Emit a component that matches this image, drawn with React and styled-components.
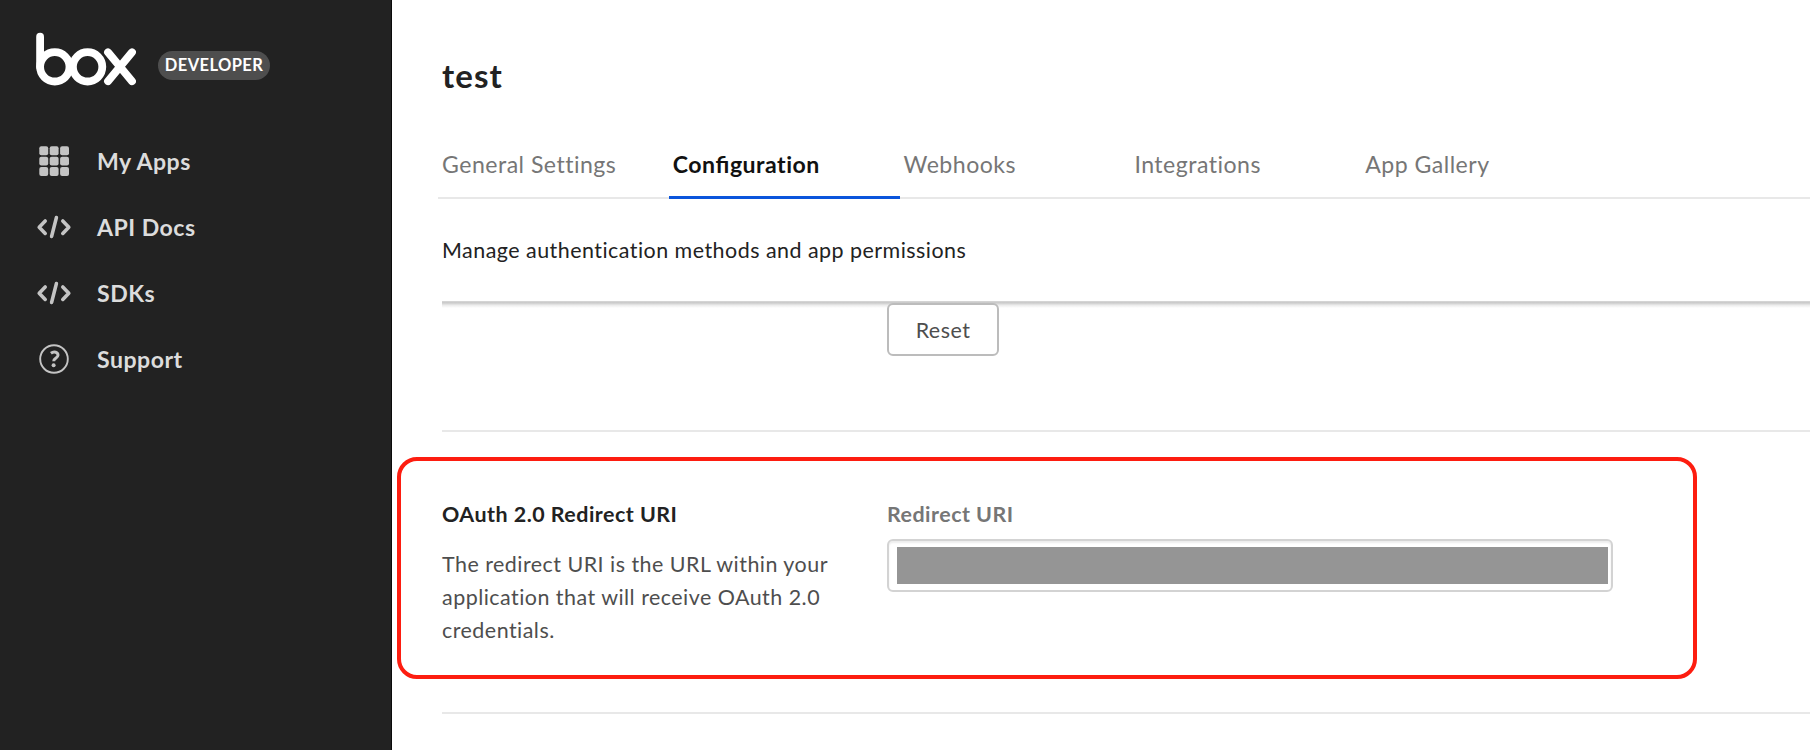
import React from "react";
import styled, { createGlobalStyle } from "styled-components";

const GlobalStyle = createGlobalStyle`
  *, *::before, *::after { box-sizing: border-box; }
  body {
    margin: 0;
    background: #fff;
    color: #222;
    font-family: Lato, "Liberation Sans", sans-serif;
    font-size: 21.45px;
    line-height: 33px;
    letter-spacing: 0.48px;
    overflow: hidden;
  }
  h1, h2, p { margin: 0; }
`;

const Page = styled.div`
  display: flex;
  height: 750px;
  overflow: hidden;
`;

const Sidebar = styled.aside`
  flex: none;
  width: 392px;
  background: #222;
  border-right: 1px solid #0a0a0a;
`;

const Brand = styled.div`
  display: flex;
  align-items: flex-start;
  padding: 32px 0 0 36px;
  height: 128px;
`;

const Badge = styled.span`
  margin: 19px 0 0 22px;
  width: 112px;
  height: 29px;
  border-radius: 15px;
  background: #4e4e4e;
  color: #fff;
  font-size: 16.5px;
  font-weight: 700;
  line-height: 29px;
  letter-spacing: 0.4px;
  text-align: center;
`;

const NavItem = styled.a`
  display: flex;
  align-items: center;
  height: 66px;
  padding-left: 36px;
  color: #dcdcdc;
  font-size: 23.1px;
  font-weight: 700;
  svg {
    flex: none;
    margin-right: 25px;
  }
`;

const Main = styled.main`
  flex: 1;
  min-width: 0;
  padding-top: 55px;
`;

const Title = styled.h1`
  margin-left: 50px;
  font-size: 33px;
  font-weight: 700;
  line-height: 40px;
  letter-spacing: 1.1px;
`;

const TabList = styled.nav`
  display: flex;
  height: 68px;
  margin: 36px 0 0 46px;
  border-bottom: 2px solid #e8e8e8;
`;

const Tab = styled.a`
  flex: none;
  width: 230.8px;
  height: 68px;
  padding-left: 4px;
  border-bottom: 3px solid ${(p) => (p.$active ? "#0b55dc" : "transparent")};
  color: ${(p) => (p.$active ? "#111" : "#767676")};
  font-size: 23.1px;
  font-weight: ${(p) => (p.$active ? 700 : 400)};
  line-height: 67px;
`;

const Ligature = styled.span`
  font-feature-settings: "liga" 1;
`;

const Intro = styled.p`
  margin-left: 50px;
  height: 102px;
  padding-top: 35px;
`;

const HeaderEdge = styled.div`
  height: 7px;
  margin: 0 0 -5px 50px;
  background: linear-gradient(#d8d8d8, #c9c9c9 25%, #ececec 60%, #fff);
`;

const ResetRow = styled.div`
  height: 129px;
  margin-left: 50px;
  padding-left: 445px;
  border-bottom: 2px solid #e8e8e8;
`;

const Button = styled.button`
  display: block;
  position: relative;
  width: 112px;
  height: 53px;
  padding: 1px 0 0;
  border: 2px solid #bcbcbc;
  border-radius: 6px;
  background: #fff;
  color: #4e4e4e;
  font: inherit;
  letter-spacing: inherit;
`;

const Highlight = styled.section`
  display: flex;
  width: 1300px;
  height: 222px;
  margin: 25px 0 0 5px;
  padding: 37px 0 0 41px;
  border: 4px solid #fd1d10;
  border-radius: 20px;
`;

const Details = styled.div`
  width: 445px;
`;

const SectionTitle = styled.h2`
  color: #222;
  font-size: 21.45px;
  font-weight: 700;
`;

const Description = styled.p`
  width: 400px;
  margin-top: 17px;
  color: #4e4e4e;
`;

const Field = styled.div`
  width: 726px;
`;

const Label = styled.label`
  display: block;
  color: #767676;
  font-weight: 700;
`;

const Input = styled.div`
  height: 53px;
  margin-top: 8px;
  padding: 6px 3px 6px 8px;
  border: 2px solid #d3d3d3;
  border-radius: 6px;
  box-shadow: inset 0 2px 2px rgba(0, 0, 0, 0.08);
`;

const Redaction = styled.div`
  height: 37px;
  background: #959595;
`;

const Divider = styled.div`
  height: 2px;
  margin: 33px 0 0 50px;
  background: #e8e8e8;
`;

const BoxLogo = () => (
  <svg width="100" height="54" viewBox="0 0 100 54" fill="none" stroke="#fff" strokeWidth="7.8" strokeLinecap="round" strokeLinejoin="round">
    <path d="M4.1 4.7V34.8" />
    <circle cx="18.8" cy="34.8" r="14.7" />
    <circle cx="51.6" cy="34.8" r="14.7" />
    <path d="M72 20.3L96 49.2M96 20.3L72 49.2" />
  </svg>
);

const GridIcon = () => (
  <svg width="36" height="36" viewBox="0 0 36 36" fill="#c4c4c4">
    {[3.3, 13.7, 24.1].map((y) =>
      [3.3, 13.7, 24.1].map((x) => <rect key={`${x}-${y}`} x={x} y={y} width="8.9" height="8.9" rx="2" />)
    )}
  </svg>
);

const CodeIcon = () => (
  <svg width="36" height="36" viewBox="0 0 36 36" fill="none" stroke="#c4c4c4" strokeWidth="3.6" strokeLinecap="round" strokeLinejoin="round">
    <path d="M9.2 12L3.2 18.2L9.2 24.4M26.8 12L32.8 18.2L26.8 24.4M20.4 8.6L15.6 27.4" />
  </svg>
);

const HelpIcon = () => (
  <svg width="36" height="36" viewBox="0 0 36 36" fill="none" stroke="#c4c4c4">
    <circle cx="18" cy="18" r="13.8" strokeWidth="1.9" />
    <path d="M14.9 12.3C18.1 9.9 22.1 11.3 22 14.2C21.9 17 17.8 16.9 17.7 20.2" strokeWidth="3" />
    <circle cx="17.6" cy="24.2" r="2" fill="#c4c4c4" stroke="none" />
  </svg>
);

const navItems = [
  { label: "My Apps", Icon: GridIcon },
  { label: "API Docs", Icon: CodeIcon },
  { label: "SDKs", Icon: CodeIcon },
  { label: "Support", Icon: HelpIcon },
];

export default function App() {
  return (
    <Page>
      <GlobalStyle />
      <Sidebar>
        <Brand>
          <BoxLogo />
          <Badge>DEVELOPER</Badge>
        </Brand>
        {navItems.map(({ label, Icon }) => (
          <NavItem key={label}>
            <Icon />
            {label}
          </NavItem>
        ))}
      </Sidebar>
      <Main>
        <Title>test</Title>
        <TabList>
          <Tab>General Settings</Tab>
          <Tab $active>
            Con<Ligature>fi</Ligature>guration
          </Tab>
          <Tab>Webhooks</Tab>
          <Tab>Integrations</Tab>
          <Tab>App Gallery</Tab>
        </TabList>
        <Intro>Manage authentication methods and app permissions</Intro>
        <HeaderEdge />
        <ResetRow>
          <Button>Reset</Button>
        </ResetRow>
        <Highlight>
          <Details>
            <SectionTitle>OAuth 2.0 Redirect URI</SectionTitle>
            <Description>
              The redirect URI is the URL within your application that will receive OAuth 2.0 credentials.
            </Description>
          </Details>
          <Field>
            <Label>Redirect URI</Label>
            <Input>
              <Redaction />
            </Input>
          </Field>
        </Highlight>
        <Divider />
      </Main>
    </Page>
  );
}
